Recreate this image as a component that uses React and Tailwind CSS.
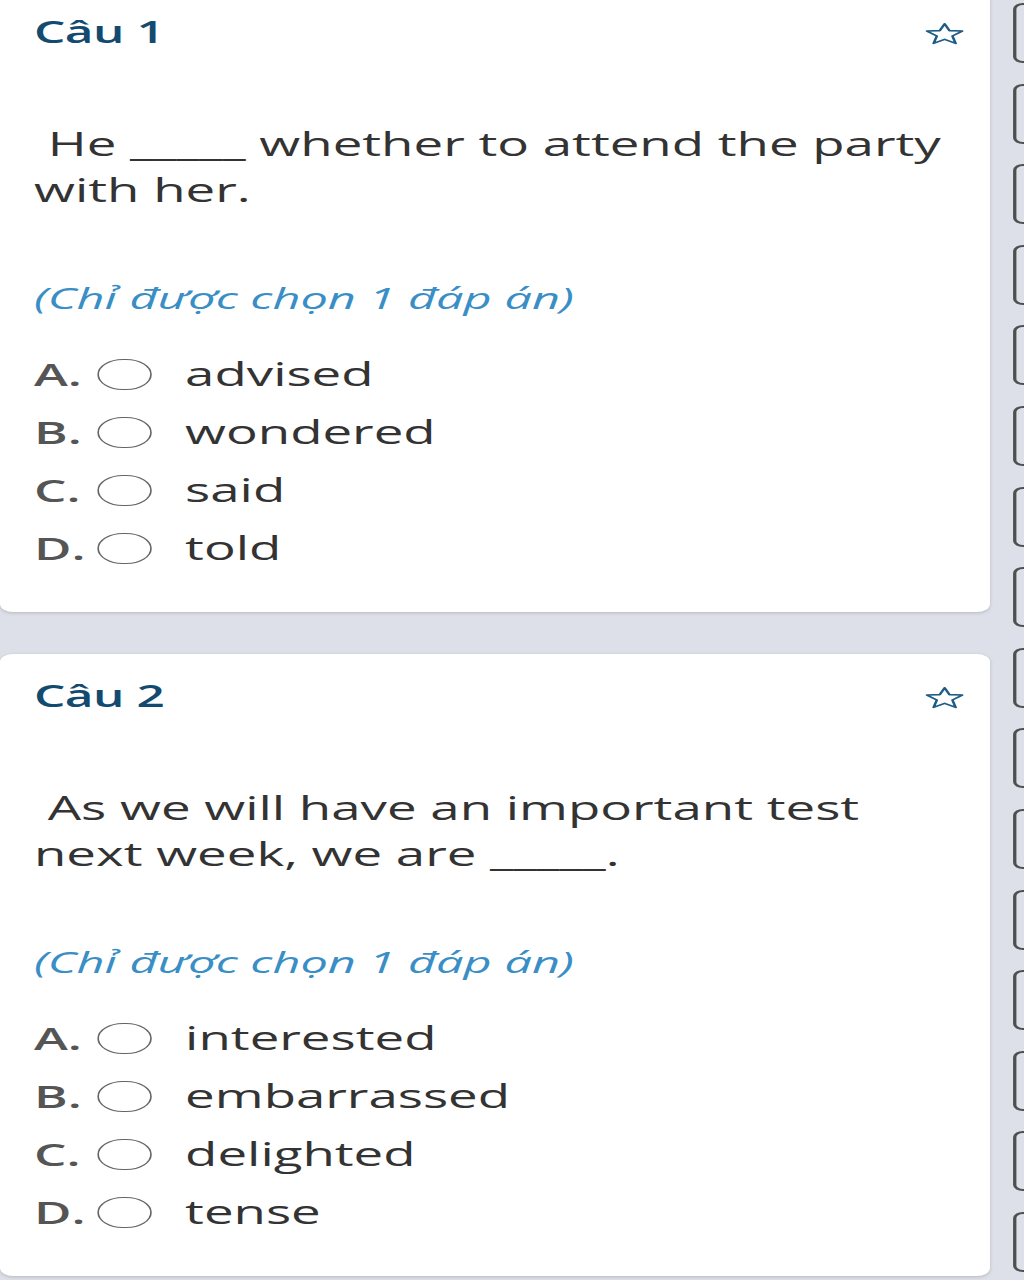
import React from 'react';

const questions = [
  {
    id: 1,
    text: '\u00a0He _____ whether to attend the party with her.',
    options: ['advised', 'wondered', 'said', 'told'],
  },
  {
    id: 2,
    text: '\u00a0As we will have an important test next week, we are _____.',
    options: ['interested', 'embarrassed', 'delighted', 'tense'],
  },
];

const letters = ['A.', 'B.', 'C.', 'D.'];

function StarIcon() {
  return (
    <svg width="25" height="22" viewBox="1 1 22 21" fill="none" className="shrink-0 mt-[4px]">
      <polygon
        points="12,1.8 14.8,8.3 22.2,8.7 16.5,13.4 18.4,20.5 12,16.6 5.6,20.5 7.5,13.4 1.8,8.7 9.2,8.3"
        stroke="#1d5c87"
        strokeWidth="1.5"
        strokeLinejoin="round"
      />
    </svg>
  );
}

function QuestionCard({ q }) {
  return (
    <div className="bg-white rounded-[8px] shadow-[0_1px_3px_rgba(0,0,0,0.18)] pl-[20.6px] pr-[15px] pt-[20px] pb-[35px]">
      <div className="flex items-center justify-between">
        <h3 className="text-[30px] leading-[44px] font-semibold tracking-[-0.3px] text-[#134b70]">Câu {q.id}</h3>
        <StarIcon />
      </div>
      <p className="mt-[67px] text-[32px] leading-[46px] text-[#333]">{q.text}</p>
      <p className="mt-[62px] text-[29.5px] leading-[46px] italic text-[#3a8ec6]">(Chỉ được chọn 1 đáp án)</p>
      <div className="mt-[24px]">
        {q.options.map((opt, i) => (
          <div key={opt} className="flex items-center h-[58px]">
            <span className="w-[38px] text-[31px] font-semibold text-[#555]">{letters[i]}</span>
            <span className="w-[33px] h-[31px] rounded-full border-[1.5px] border-[#666] shrink-0" />
            <span className="ml-[20.6px] text-[32px] text-[#333]">{opt}</span>
          </div>
        ))}
      </div>
    </div>
  );
}

export default function App() {
  return (
    <div className="h-[1280px] overflow-hidden bg-[#dde0e8] font-['Open_Sans',sans-serif]">
      <div className="w-[621px] origin-top-left scale-x-[1.65] flex">
        <div className="w-[600px] shrink-0 -mt-[10px] flex flex-col gap-[42px]">
          {questions.map((q) => (
            <QuestionCard key={q.id} q={q} />
          ))}
        </div>
        <div className="flex flex-col gap-[20.6px] pt-[3px] ml-[14px]">
          {Array.from({ length: 16 }).map((_, i) => (
            <div key={i} className="w-[20px] h-[60px] shrink-0 border-2 border-[#4f4f4f] rounded-[6px]" />
          ))}
        </div>
      </div>
    </div>
  );
}
